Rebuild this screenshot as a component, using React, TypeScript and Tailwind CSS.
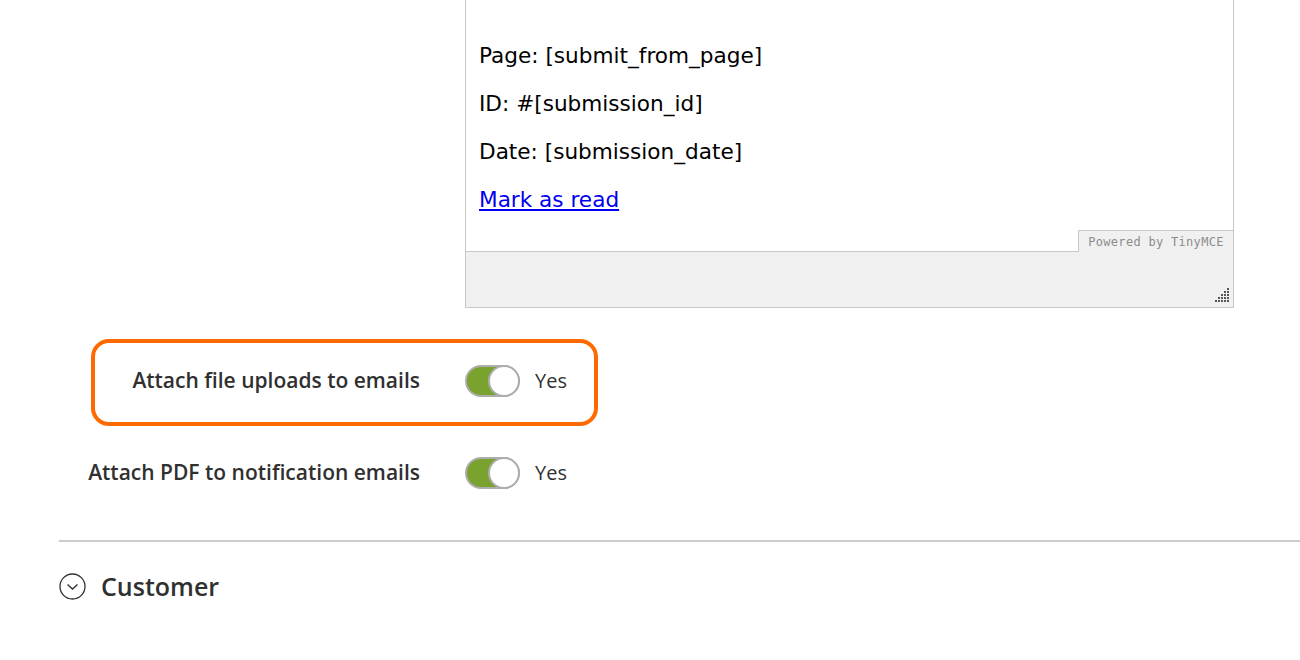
const labelFont = { fontFamily: '"Open Sans", "Liberation Sans", sans-serif' };

const Toggle = () => (
  <div className="flex h-[32px] w-[55px] items-center justify-end rounded-full border-2 border-[#adadad] bg-[#79a22e]">
    <div className="h-[32px] w-[32px] -mr-[2px] rounded-full border-2 border-[#adadad] bg-white" />
  </div>
);

const SettingRow = ({ label, labelWidth }: { label: string; labelWidth: string }) => (
  <div className="flex items-center">
    <div className={`${labelWidth} text-right text-[21px] font-semibold text-[#303030]`}>{label}</div>
    <div className="ml-[45px]">
      <Toggle />
    </div>
    <span className="ml-[15px] text-[20px] text-[#303030]">Yes</span>
  </div>
);

const ResizeGrip = () => {
  const dots: [number, number][] = [];
  for (let row = 0; row < 5; row++) {
    for (let col = 4 - row; col < 5; col++) {
      dots.push([col * 3, row * 3]);
    }
  }
  return (
    <svg width="14" height="14" viewBox="0 0 14 14">
      {dots.map(([x, y], i) => (
        <rect key={i} x={x} y={y} width="2" height="2" fill="#555" />
      ))}
    </svg>
  );
};

export default function App() {
  return (
    <div className="h-[660px] w-[1300px] overflow-hidden bg-white" style={labelFont}>
      {/* Editor */}
      <div className="ml-[465px] w-[769px] border-x border-b border-[#c8c8c8]">
        <div
          className="flex flex-col pl-[13px] pt-[32px] pb-[6px] text-[21.6px] leading-[48px] text-black"
          style={{ fontFamily: '"DejaVu Sans", Verdana, sans-serif' }}
        >
          <p>Page: [submit_from_page]</p>
          <p>ID: #[submission_id]</p>
          <p>Date: [submission_date]</p>
          <p>
            <a href="#" className="text-[#0000ee] underline">
              Mark as read
            </a>
          </p>
        </div>
        <div className="flex h-[22px]">
          <div className="flex-1 border-b border-[#c8c8c8]" />
          <div
            className="flex w-[155px] items-center justify-center border-l border-t border-[#c8c8c8] bg-[#f0f0f0] text-[12px] tracking-[0.3px] text-[#8c8c8c]"
            style={{ fontFamily: '"DejaVu Sans Mono", monospace' }}
          >
            Powered by TinyMCE
          </div>
        </div>
        <div className="flex h-[55px] items-end justify-end bg-[#f0f0f0] pb-[5px] pr-[4px]">
          <ResizeGrip />
        </div>
      </div>

      {/* Highlighted row */}
      <div className="ml-[91px] mt-[31px] flex h-[87px] w-[507px] items-center rounded-[18px] border-4 border-[#ff6a00] pb-[3px]">
        <SettingRow label="Attach file uploads to emails" labelWidth="w-[325px]" />
      </div>

      <div className="ml-[88px] mt-[31px]">
        <SettingRow label="Attach PDF to notification emails" labelWidth="w-[332px]" />
      </div>

      {/* Section divider */}
      <div className="ml-[59px] mt-[51px] border-t-2 border-[#cccccc]" />

      <div className="ml-[59px] mt-[26px] flex items-center">
        <svg width="27" height="27" viewBox="0 0 27 27" fill="none">
          <circle cx="13.5" cy="13.5" r="12.5" stroke="#303030" strokeWidth="1.3" />
          <path d="M8.5 11.5 L13.5 16 L18.5 11.5" stroke="#303030" strokeWidth="1.4" />
        </svg>
        <span className="ml-[15px] text-[25px] font-semibold text-[#303030]">Customer</span>
      </div>
    </div>
  );
}
